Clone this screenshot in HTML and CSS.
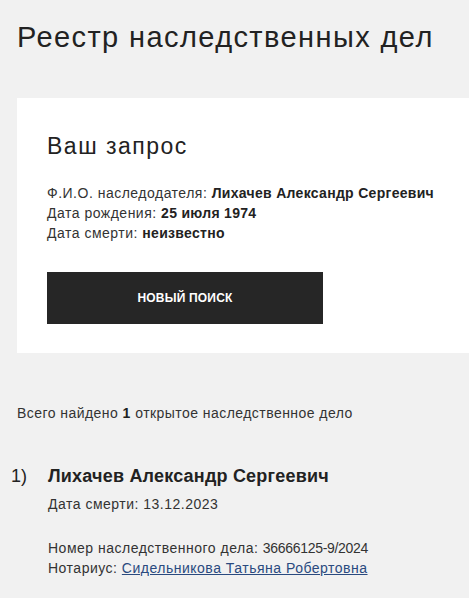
FILE: index.html
```html
<!DOCTYPE html>
<html lang="ru">
<head>
<meta charset="utf-8">
<title>Реестр наследственных дел</title>
<link rel="stylesheet" href="styles.css">
</head>
<body>
<div class="page">
  <h1 class="title">Реестр наследственных дел</h1>
  <section class="card">
    <h2 class="card-title">Ваш запрос</h2>
    <div class="query">
      <div>Ф.И.О. наследодателя: <b>Лихачев Александр Сергеевич</b></div>
      <div>Дата рождения: <b>25 июля 1974</b></div>
      <div>Дата смерти: <b>неизвестно</b></div>
    </div>
    <button class="btn" type="button">НОВЫЙ ПОИСК</button>
  </section>
  <p class="summary">Всего найдено <b>1</b> открытое наследственное дело</p>
  <div class="result">
    <div class="num">1)</div>
    <div class="result-body">
      <div class="name">Лихачев Александр Сергеевич</div>
      <div class="line">Дата смерти: 13.12.2023</div>
      <div class="details">
        <div>Номер наследственного дела: <span class="case-no">36666125-9/2024</span></div>
        <div>Нотариус: <a class="link" href="#">Сидельникова Татьяна Робертовна</a></div>
      </div>
    </div>
  </div>
</div>
</body>
</html>
```

FILE: styles.css
```css
html, body {
  margin: 0;
  padding: 0;
}
body {
  background: #f1f1f1;
  font-family: "Liberation Sans", Arial, sans-serif;
  color: #333;
  font-size: 14px;
  line-height: 20px;
  letter-spacing: 0.5px;
}
.page {
  padding: 21px 0 0 17px;
}
.title {
  margin: 0 0 45px 0;
  font-size: 29px;
  line-height: 32px;
  font-weight: normal;
  letter-spacing: 1.4px;
  color: #222;
}
.card {
  background: #fff;
  padding: 35px 4px 29px 30px;
}
.card-title {
  margin: 0 0 24px 0;
  font-size: 23px;
  line-height: 26px;
  font-weight: normal;
  letter-spacing: 1.5px;
  color: #222;
}
.query {
  white-space: nowrap;
}
.query b {
  color: #222;
  letter-spacing: 0.3px;
}
.btn {
  display: block;
  margin-top: 29px;
  width: 276px;
  height: 52px;
  border: 0;
  background: #262626;
  color: #fff;
  font-family: "Liberation Sans", Arial, sans-serif;
  font-weight: bold;
  font-size: 12px;
  letter-spacing: 0.2px;
  padding: 0;
}
.summary {
  margin: 50px 0 0 0;
  letter-spacing: 0.45px;
}
.summary b {
  color: #222;
}
.result {
  display: flex;
  margin: 42px 0 0 -6px;
}
.num {
  width: 37px;
  flex: none;
  font-size: 18px;
  line-height: 22px;
  letter-spacing: 0;
  color: #222;
}
.name {
  font-size: 18px;
  line-height: 22px;
  font-weight: bold;
  letter-spacing: 0.2px;
  color: #222;
}
.line {
  margin-top: 7px;
}
.details {
  margin-top: 24px;
}
.case-no {
  letter-spacing: -0.3px;
}
.link {
  color: #2a4a7f;
  text-decoration: underline;
}
```
